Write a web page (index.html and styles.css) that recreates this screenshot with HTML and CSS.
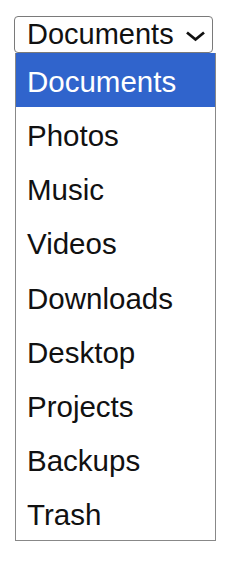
FILE: index.html
```html
<!DOCTYPE html>
<html lang="en">
  <head>
    <meta charset="UTF-8" />
    <meta name="viewport" content="width=device-width, initial-scale=1.0" />
    <title>Folder Picker</title>
    <link rel="stylesheet" href="styles.css">
  </head>
  <body>
    <div class="picker">
      <div class="picker-button">
        <span>Documents</span>
        <svg class="chevron" width="21" height="12" viewBox="0 0 21 12">
          <path d="M2 2.5 L10.5 9.5 L19 2.5" fill="none" stroke="#111" stroke-width="2.8" />
        </svg>
      </div>
      <ul class="picker-list">
        <li class="selected">Documents</li>
        <li>Photos</li>
        <li>Music</li>
        <li>Videos</li>
        <li>Downloads</li>
        <li>Desktop</li>
        <li>Projects</li>
        <li>Backups</li>
        <li>Trash</li>
      </ul>
    </div>
  </body>
</html>
```

FILE: styles.css
```css
body {
  margin: 0;
  font-family: "Liberation Sans", Arial, sans-serif;
  background: #fff;
  color: #111;
}
.picker {
  padding: 16px 0 0 14px;
}
.picker-button {
  width: 199px;
  height: 37px;
  box-sizing: border-box;
  border: 1px solid #7a7a7a;
  border-radius: 4px;
  display: flex;
  align-items: center;
  justify-content: space-between;
  padding: 0 6px 0 12px;
  font-size: 29px;
}
.chevron {
  display: block;
  margin-top: 2px;
}
.picker-list {
  list-style: none;
  margin: 0 0 0 1px;
  padding: 0;
  width: 201px;
  box-sizing: border-box;
  border: 1px solid #888;
  border-top: none;
}
.picker-list li {
  height: 54.15px;
  box-sizing: border-box;
  padding: 3px 0 0 11px;
  line-height: 51px;
  font-size: 29.5px;
}
.picker-list li.selected {
  background: #3064cc;
  color: #fff;
}
```
